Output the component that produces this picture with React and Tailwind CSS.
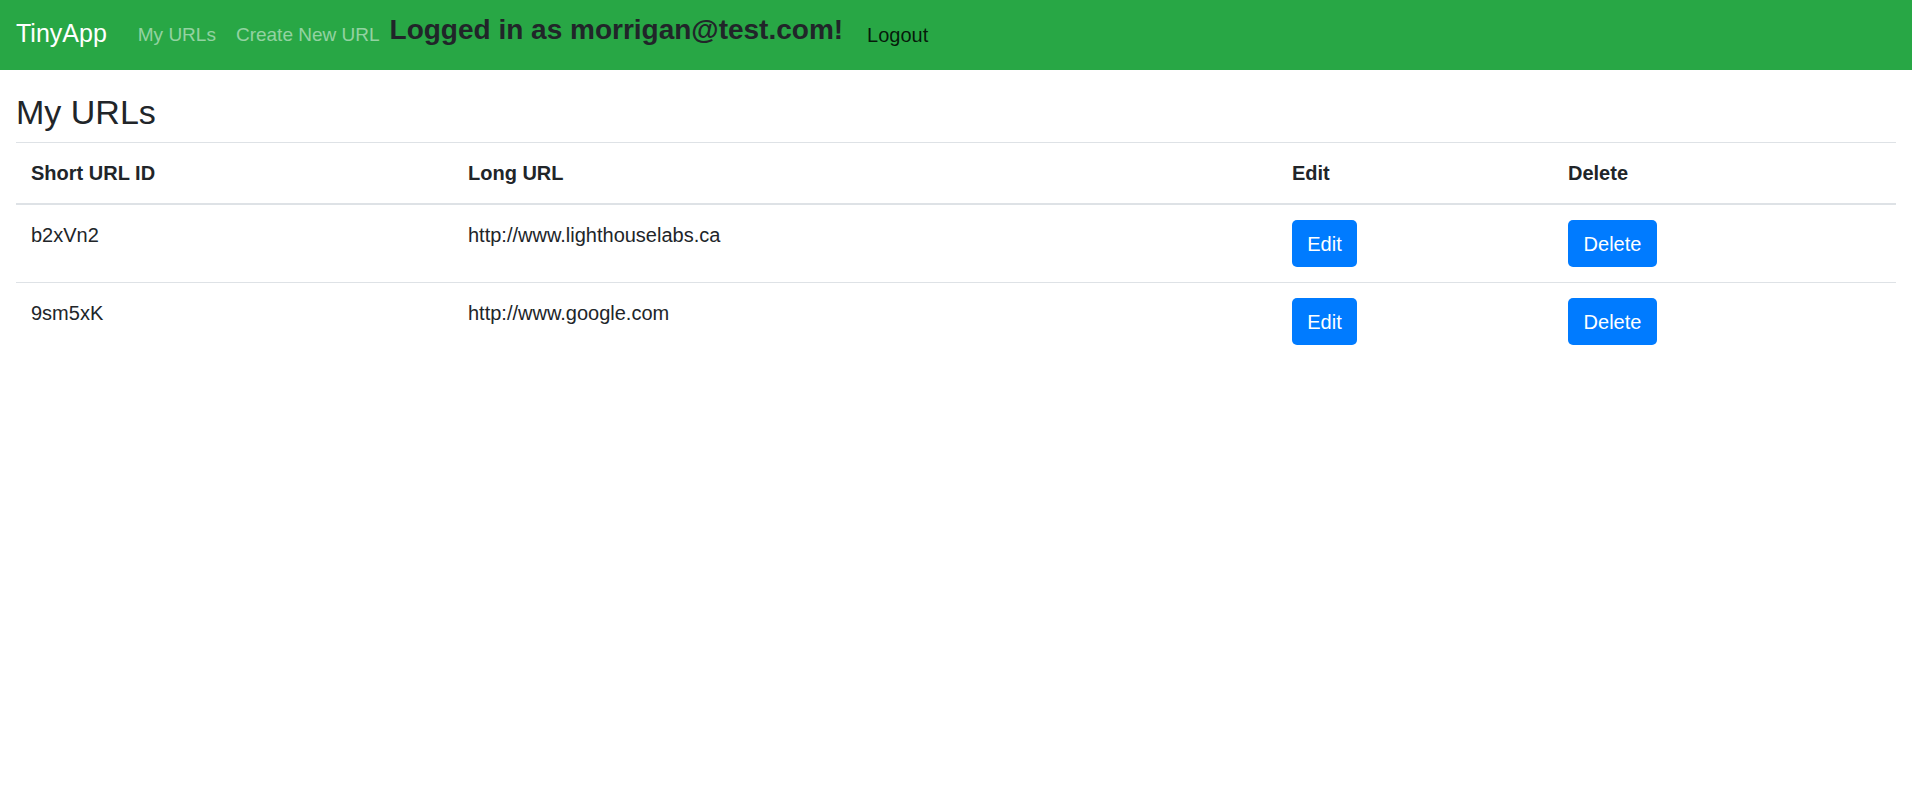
import React from 'react';

const urls = [
    { id: 'b2xVn2', longURL: 'http://www.lighthouselabs.ca' },
    { id: '9sm5xK', longURL: 'http://www.google.com' },
];

function Navbar() {
    return (
        <nav className="h-[70px] bg-[#28a745] px-4 flex items-center">
            <a className="text-[25px] leading-[37px] text-white pb-[3px] mr-[21px]">TinyApp</a>
            <a className="text-[19px] leading-[30px] text-white/50 px-[10px]">My URLs</a>
            <a className="text-[19px] leading-[30px] text-white/50 px-[10px]">Create New URL</a>
            <h3 className="text-[28px] leading-[34px] font-bold text-[#212529] pb-[11px]">Logged in as morrigan@test.com!</h3>
            <a className="text-[20px] leading-[30px] text-black/85 ml-[24px]">Logout</a>
        </nav>
    );
}

export default function App() {
    return (
        <div className="min-h-screen bg-white font-['Liberation_Sans',Arial,sans-serif] text-[#212529]">
            <Navbar />
            <main className="px-4">
                <h3 className="text-[34px] leading-[42px] mt-[21px] mb-[9px]">My URLs</h3>
                <table className="w-full table-fixed border-collapse text-[20px] leading-[30px]">
                    <thead>
                        <tr>
                            <th className="w-[437px] text-left font-bold p-[15px] border-t border-b-2 border-[#dee2e6]">Short URL ID</th>
                            <th className="w-[824px] text-left font-bold p-[15px] border-t border-b-2 border-[#dee2e6]">Long URL</th>
                            <th className="w-[276px] text-left font-bold p-[15px] border-t border-b-2 border-[#dee2e6]">Edit</th>
                            <th className="w-[343px] text-left font-bold p-[15px] border-t border-b-2 border-[#dee2e6]">Delete</th>
                        </tr>
                    </thead>
                    <tbody>
                        {urls.map((url) => (
                            <tr key={url.id}>
                                <td className="align-top p-[15px] border-t border-[#dee2e6]">{url.id}</td>
                                <td className="align-top p-[15px] border-t border-[#dee2e6]">{url.longURL}</td>
                                <td className="align-top p-[15px] border-t border-[#dee2e6]">
                                    <button className="w-[65px] h-[47px] rounded-[5px] bg-[#007bff] text-white flex items-center justify-center">Edit</button>
                                </td>
                                <td className="align-top p-[15px] border-t border-[#dee2e6]">
                                    <button className="w-[89px] h-[47px] rounded-[5px] bg-[#007bff] text-white flex items-center justify-center">Delete</button>
                                </td>
                            </tr>
                        ))}
                    </tbody>
                </table>
            </main>
        </div>
    );
}
